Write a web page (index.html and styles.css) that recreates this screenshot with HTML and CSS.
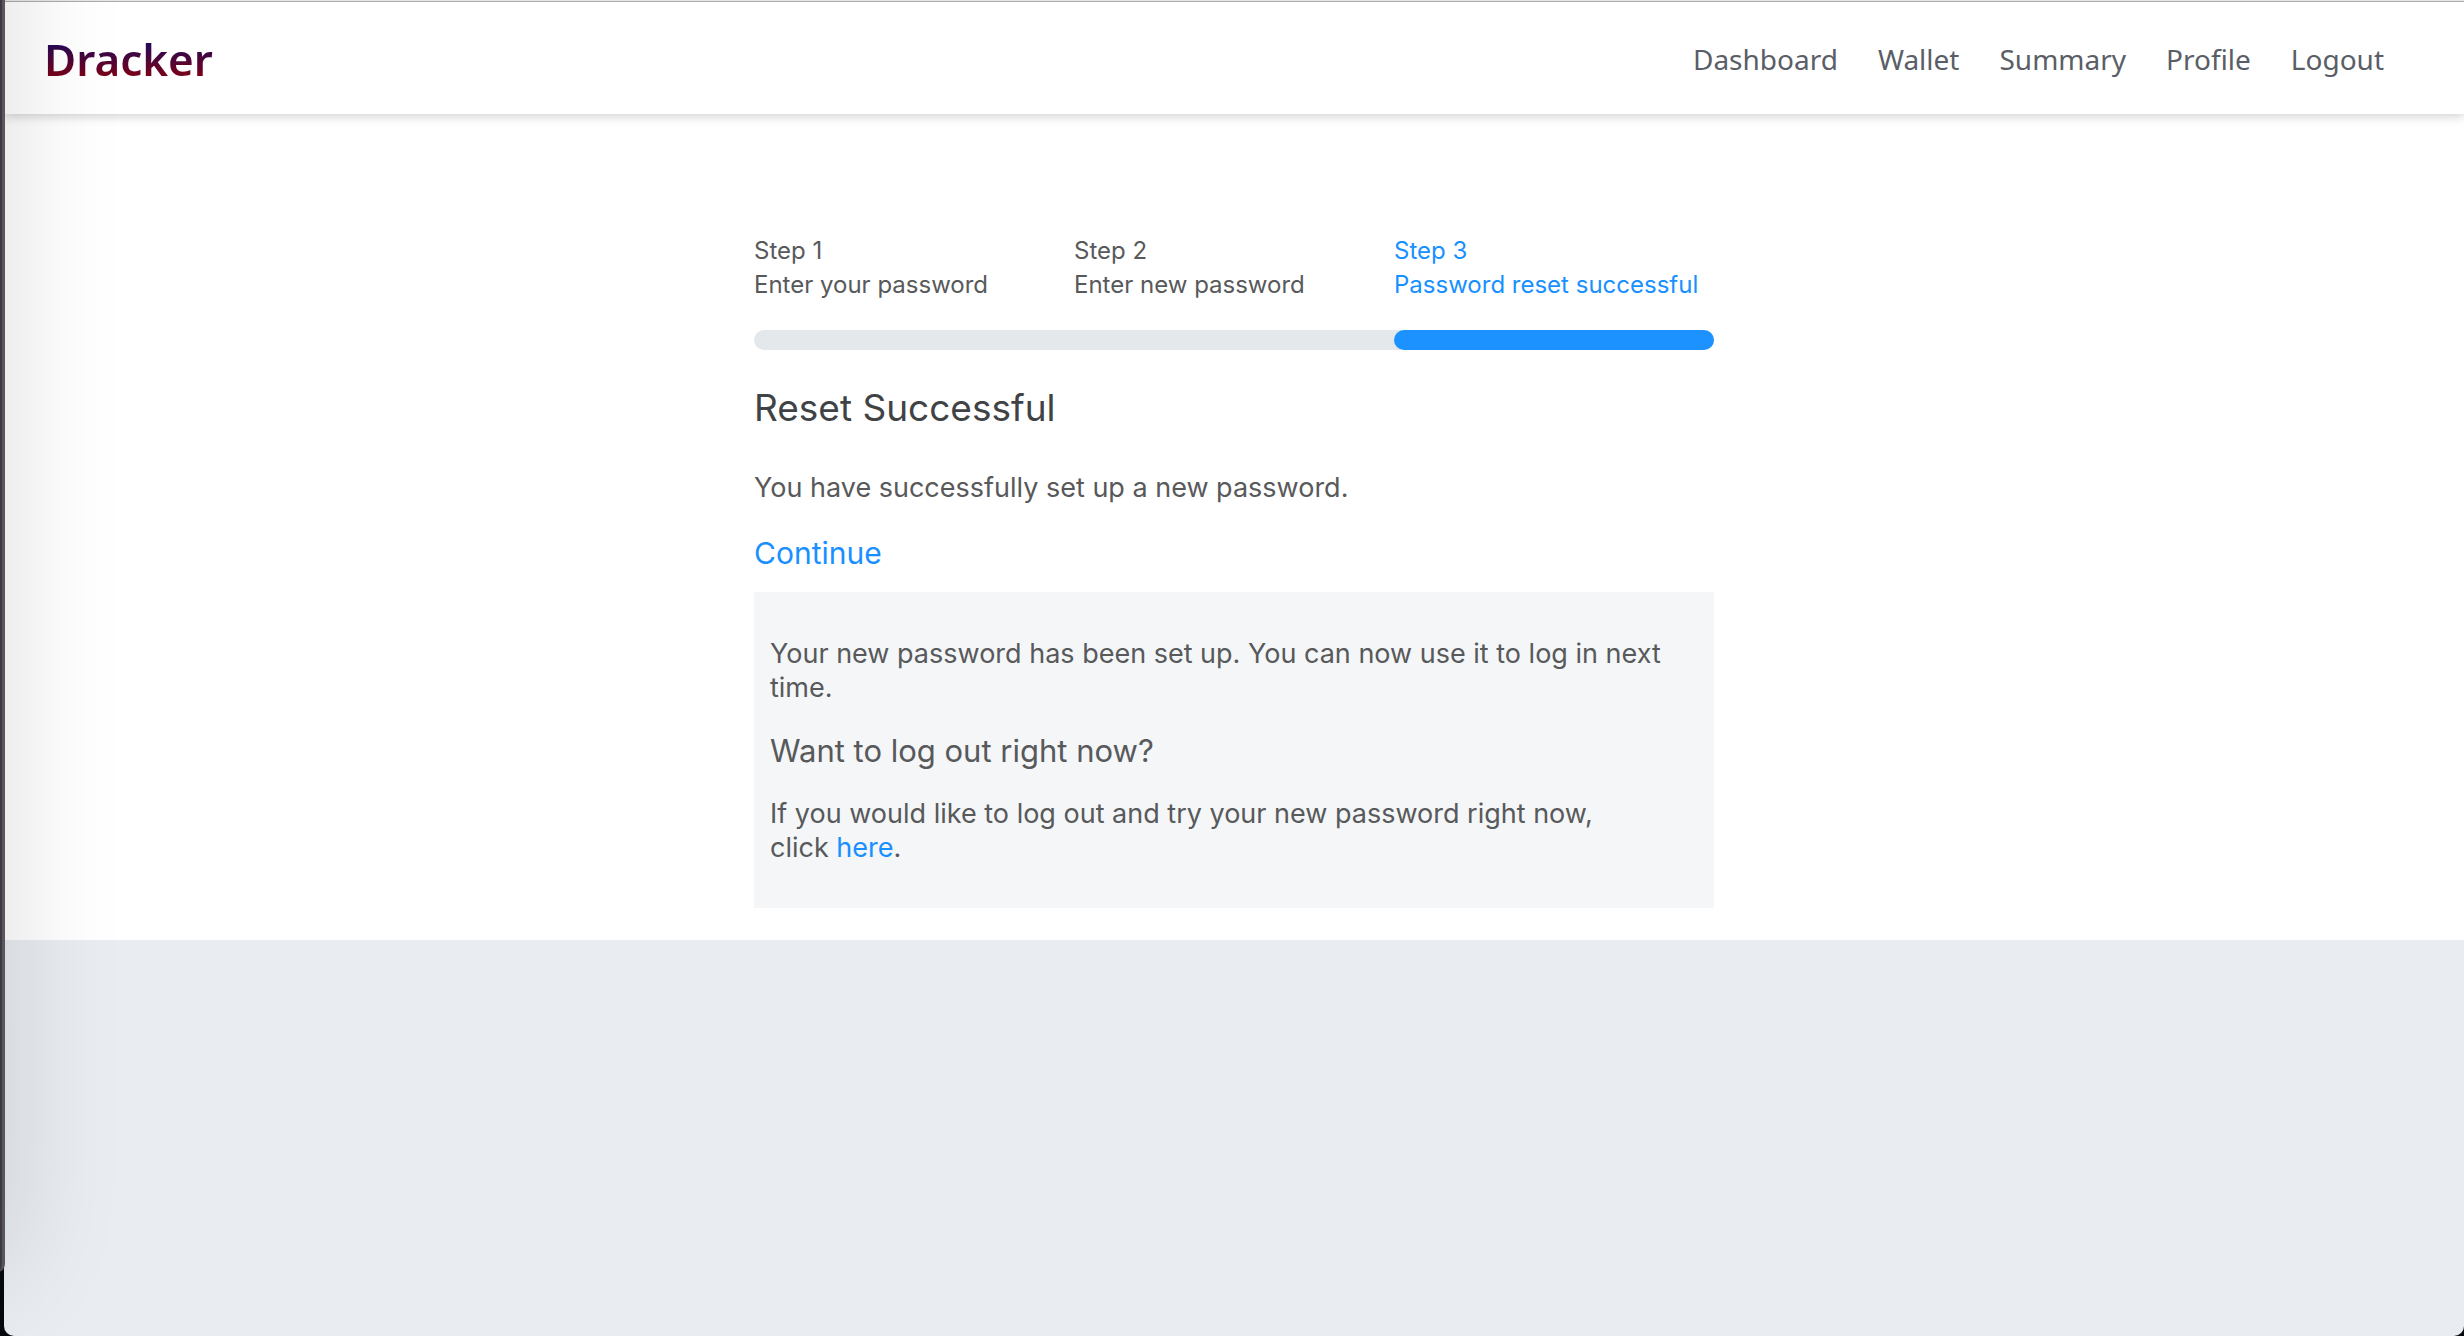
FILE: index.html
```html
<!DOCTYPE html>
<html lang="en">
<head>
  <meta charset="utf-8">
  <title>Dracker</title>
  <meta name="viewport" content="width=device-width, initial-scale=1">
  <link rel="stylesheet" href="styles.css">
</head>
<body>
  <div class="window">
    <header class="navbar">
      <a class="brand" href="#">Dracker</a>
      <nav class="nav">
        <a class="nav-link" href="#">Dashboard</a>
        <a class="nav-link" href="#">Wallet</a>
        <a class="nav-link" href="#">Summary</a>
        <a class="nav-link" href="#">Profile</a>
        <a class="nav-link" href="#">Logout</a>
      </nav>
    </header>
    <main class="page">
      <div class="content">
        <ol class="steps">
          <li class="step">Step 1<br>Enter your password</li>
          <li class="step">Step 2<br>Enter new password</li>
          <li class="step step-active" aria-current="step">Step 3<br>Password reset successful</li>
        </ol>
        <div class="progress"><div class="progress-bar"></div></div>
        <h1 class="title">Reset Successful</h1>
        <p class="lead">You have successfully set up a new password.</p>
        <a class="continue" href="#">Continue</a>
        <section class="notice">
          <p class="notice-text">Your new password has been set up. You can now use it to log in next time.</p>
          <h2 class="notice-title">Want to log out right now?</h2>
          <p class="notice-text">If you would like to log out and try your new password right now, click&nbsp;<a class="link" href="#">here</a>.</p>
        </section>
      </div>
    </main>
  </div>
  <div class="backdrop" aria-hidden="true"><div class="neighbour"></div></div>
</body>
</html>
```

FILE: styles.css
```css
* {
  box-sizing: border-box;
}

html {
  background: #07090f;
}

body {
  margin: 0;
  padding-left: 4px;
  font-family: Inter, "Liberation Sans", sans-serif;
  font-size: 27px;
  line-height: 34px;
  color: #58595b;
}

a {
  text-decoration: none;
}

.window {
  min-height: 100vh;
  border-radius: 0 0 10px 10px;
  background: #e9ecf1;
  overflow: hidden;
}

.navbar {
  position: relative;
  display: flex;
  align-items: center;
  justify-content: space-between;
  height: 114px;
  padding: 4px 80px 0 40px;
  background: linear-gradient(#e6e6e6 1px, #acacac 1px, #acacac 2px, #fff 2px);
  box-shadow: 0 2px 10px rgba(0, 0, 0, 0.2);
  font-family: "Noto Sans", "Open Sans", sans-serif;
}

.brand {
  font-size: 44px;
  line-height: 60px;
  font-weight: 600;
  color: transparent;
  background: linear-gradient(#1c0a5c 20%, #7d0016 80%);
  background-clip: text;
  -webkit-background-clip: text;
}

.nav {
  display: flex;
  gap: 40px;
}

.nav-link {
  font-size: 28px;
  line-height: 40px;
  color: #5a5e66;
}

.page {
  padding: 120px 24px 32px;
  background: #fff;
}

.content {
  max-width: 960px;
  margin: 0 auto;
}

.steps {
  display: grid;
  grid-template-columns: repeat(3, 1fr);
  margin: 0 0 28px;
  padding: 0;
  list-style: none;
  font-size: 24px;
}

.step-active,
.continue,
.link {
  color: #1890ff;
}

.step {
  white-space: nowrap;
}

.progress {
  height: 20px;
  border-radius: 10px;
  background: #e4e8eb;
}

.progress-bar {
  width: calc(100% / 3);
  height: 100%;
  margin-left: auto;
  border-radius: 10px;
  background: #1b92ff;
}

.title {
  margin: 34px 0 39px;
  font-size: 37px;
  line-height: 48px;
  font-weight: 400;
  color: #3f4346;
}

.lead {
  margin: 0 0 28px;
}

.continue {
  display: block;
  width: fit-content;
  margin-bottom: 19px;
  font-size: 30px;
  line-height: 40px;
}

.notice {
  padding: 45px 16px 43px;
  background: #f4f6f8;
}

.notice-text {
  margin: 0;
}

.notice-title {
  margin: 26px 0;
  font-size: 31px;
  line-height: 40px;
  font-weight: 400;
}

/* Edge of the window lying to the left, with its shadow */
.backdrop {
  position: fixed;
  inset: 0;
  overflow: hidden;
  pointer-events: none;
}

.neighbour {
  width: 305px;
  height: calc(100% + 136px);
  margin: -200px 0 0 -300px;
  border-right: 3px solid #5b565c;
  border-radius: 0 0 8px 0;
  background: #3c3943;
  box-shadow: 0 0 120px rgba(0, 0, 0, 0.14);
}
```
